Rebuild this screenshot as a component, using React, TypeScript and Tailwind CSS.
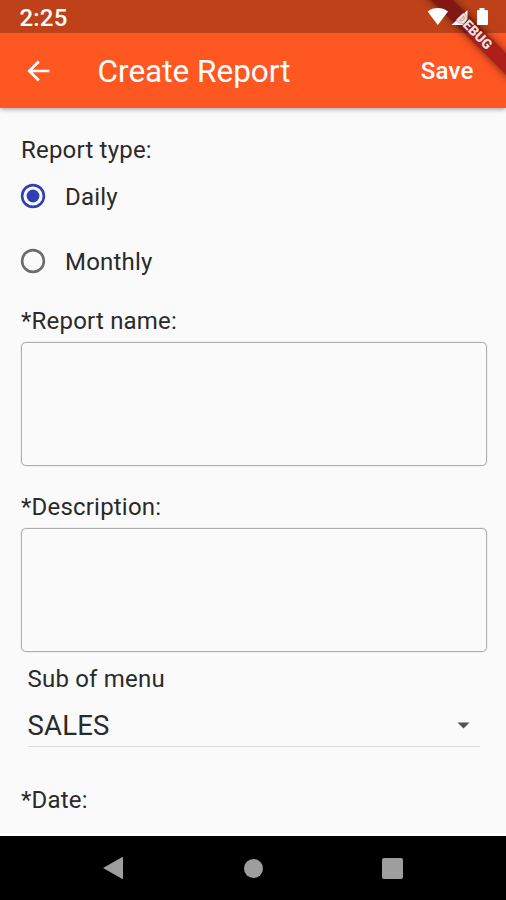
import { useState } from "react";

const reportTypes = ["Daily", "Monthly"];

// translucent system bar, drawn over the app and its debug banner
const StatusBar = () => (
  <div className="absolute inset-x-0 top-0 z-30 flex h-[32.5px] items-start justify-between bg-black/25 pt-[6px] pr-[17px] pl-[19.5px] text-white">
    <span className="text-[24px] leading-6 font-medium tracking-[0.2px]">
      2:25
    </span>
    <div className="flex pt-px">
      <svg width="22" height="19" viewBox="0 0 22 19" fill="currentColor">
        <path d="M0.6 4.4C6.5 -0.2 15 -0.2 21 4.4L10.8 18Z" />
      </svg>
      <svg width="24" height="19" viewBox="0 0 24 19" fill="currentColor">
        <path d="M2.5 18H14L18.500 12V3Z" />
      </svg>
      <svg width="16" height="19" viewBox="0 0 16 19" fill="currentColor">
        <path d="M6.5 1h5v2h2.500q1 0 1 1v13q0 1 -1 1h-9q-1 0 -1 -1v-13q0 -1 1 -1h1.500z" />
      </svg>
    </div>
  </div>
);

const AppBar = () => (
  <header className="z-10 flex h-[108px] shrink-0 items-center bg-[#ff5722] pt-[34px] pr-[32.5px] pl-[27px] text-white shadow-[0_1px_5px_rgba(0,0,0,0.4)]">
    <button type="button" aria-label="Back" className="mr-[47.5px]">
      <svg
        width="23"
        height="22"
        viewBox="0 0 23 22"
        fill="none"
        stroke="currentColor"
        strokeWidth="2.7"
      >
        <path d="M22.5 11H2.5M11.8 1.5L2.3 11L11.8 20.5" />
      </svg>
    </button>
    <h1 className="grow pt-px text-[31.5px] leading-9">Create Report</h1>
    <button
      type="button"
      className="text-[24px] leading-7 font-medium tracking-[0.2px]"
    >
      Save
    </button>
  </header>
);

const DebugBanner = () => (
  <>
    <div className="pointer-events-none absolute top-0 right-0 z-20 h-[110px] w-[110px] overflow-hidden">
      <div className="absolute top-[24px] left-[18px] h-[16px] w-[120px] rotate-45 bg-[#a51a1a]/90 shadow-[0_0_8px_rgba(0,0,0,0.5)]" />
    </div>
    {/* lettering stays readable above the signal icon */}
    <div className="pointer-events-none absolute top-0 right-0 z-40 h-[110px] w-[110px] overflow-hidden">
      <div className="absolute top-[24px] left-[18px] flex h-[16px] w-[120px] rotate-45 items-center justify-center text-[13.7px] leading-none font-black text-[#efe0dd] [text-shadow:0_0_2px_#6b1a17]">
        DEBUG
      </div>
    </div>
  </>
);

const Radio = ({ checked }: { checked: boolean }) => (
  <svg
    width="26"
    height="26"
    viewBox="0 0 26 26"
    className={`-mt-px -ml-px shrink-0 ${checked ? "text-[#303fb8]" : "text-[#6c6c6c]"}`}
  >
    <circle
      cx="13"
      cy="13"
      r="10.9"
      fill="none"
      stroke="currentColor"
      strokeWidth="2.6"
    />
    {checked && <circle cx="13" cy="13" r="6.4" fill="currentColor" />}
  </svg>
);

type TextFieldProps = { label: string; className?: string };

const TextField = ({ label, className }: TextFieldProps) => (
  <label className={`block ${className ?? ""}`}>
    <span className="block pl-[0.5px] leading-7">{label}</span>
    <textarea className="mt-[7px] block h-[124px] w-full resize-none rounded-[5px] border border-[#aeaeae] bg-transparent shadow-[0_0_1px_#a0a0a0] outline-none" />
  </label>
);

const NavBar = () => (
  <nav className="flex h-[67px] shrink-0 items-center border-t-3 border-white bg-black pl-[102px] text-[#9e9e9e]">
    <svg width="22" height="24" viewBox="0 0 22 24" fill="currentColor">
      <path d="M1 12L20 1.2Q21 0.6 21 2V22Q21 23.4 20 22.8Z" />
    </svg>
    <div className="ml-[120px] size-[19px] rounded-full bg-[#9e9e9e]" />
    <div className="ml-[119px] size-[21px] rounded-[2px] bg-[#9e9e9e]" />
  </nav>
);

export default function App() {
  const [reportType, setReportType] = useState("Daily");

  return (
    <div className="relative flex h-[900px] w-[506px] flex-col overflow-hidden bg-[#fafafa] font-['Roboto',sans-serif] text-[24px] text-[#2a2a2a]">
      <StatusBar />
      <AppBar />
      <main className="grow pt-[28px] pr-[19px] pl-[20.5px] tracking-[0.2px]">
        <p className="pl-[0.5px] leading-7">Report type:</p>
        {/* Report type radios */}
        <div>
          {reportTypes.map((type) => (
            <button
              key={type}
              type="button"
              className="flex h-[65px] w-full items-center gap-[19.5px]"
              onClick={() => setReportType(type)}
            >
              <Radio checked={type === reportType} />
              <span className="leading-7">{type}</span>
            </button>
          ))}
        </div>
        <TextField label="*Report name:" className="mt-[13px]" />
        <TextField label="*Description:" className="mt-[27px]" />
        <div className="mx-[7px] mt-[13px] border-b border-[#dedede]">
          <p className="leading-7">Sub of menu</p>
          <div className="mt-[13px] flex h-[40px] items-center justify-between pr-[10px] pb-px">
            <span className="text-[27.5px] leading-8">SALES</span>
            <svg width="13" height="7" viewBox="0 0 13 7" fill="#505050">
              <path d="M0.5 0.5H12.5L6.5 6.5Z" />
            </svg>
          </div>
        </div>
        <p className="mt-[39px] pl-[0.5px] leading-7">*Date:</p>
      </main>
      <NavBar />
      <DebugBanner />
    </div>
  );
}
